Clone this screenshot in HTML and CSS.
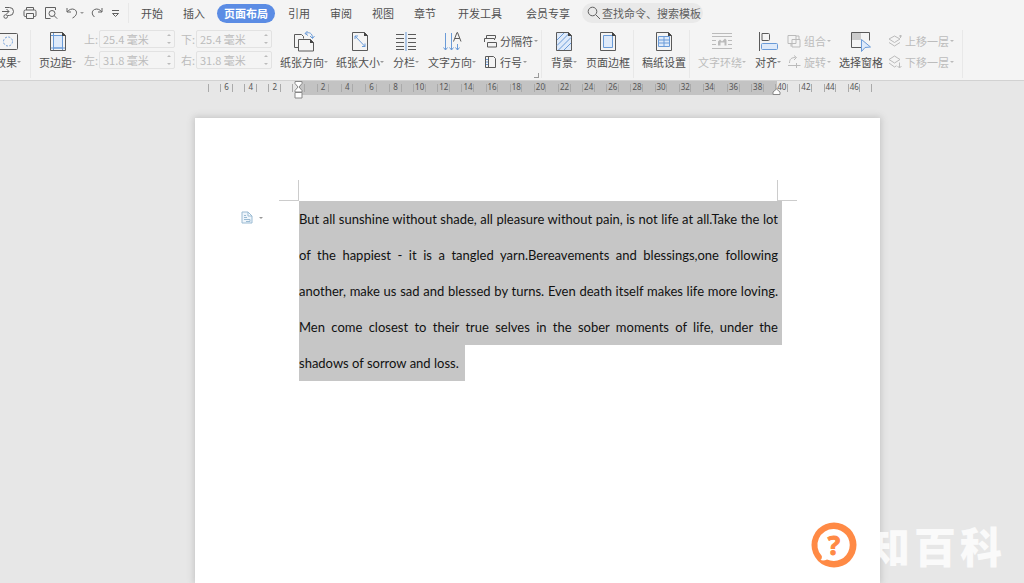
FILE: index.html
```html
<!DOCTYPE html>
<html lang="zh-CN">
<head>
<meta charset="utf-8">
<title>页面布局</title>
<link rel="stylesheet" href="styles.css">
</head>
<body>
<header class="menubar">
  <div class="quick">
    <button class="qbtn" aria-label="格式"><svg width="13" height="14" viewBox="0 0 13 14"><path d="M3 1.500h4.500a4 4 0 0 1 0 8H5.500M0 5.500h7M4.500 3L7 5.500 4.500 8"/><circle cx="3.700" cy="10.500" r="1.800"/></svg></button>
    <button class="qbtn" aria-label="打印"><svg width="14" height="14" viewBox="0 0 14 14"><path d="M3.500 4V1.500h7V4M3.500 10.500H2.200A1.200 1.200 0 0 1 1 9.300V5.500A1.500 1.500 0 0 1 2.500 4h9A1.500 1.500 0 0 1 13 5.500v3.800a1.200 1.200 0 0 1-1.200 1.200h-1.300M3.500 7.500h7v5h-7z"/></svg></button>
    <button class="qbtn" aria-label="打印预览"><svg width="14" height="14" viewBox="0 0 14 14"><path d="M11.500 4V1.500h-10v11h5"/><circle cx="8" cy="7.500" r="3"/><path d="M10.200 9.700l3 3"/></svg></button>
    <button class="qbtn" aria-label="撤销"><svg width="12" height="14" viewBox="0 0 12 14"><path d="M1 2v4h4M1.200 5.800C3 3.500 6 2.300 8.500 3.500c3 1.500 3 6-2 8.500"/></svg><i class="caret"></i></button>
    <button class="qbtn" aria-label="恢复"><svg width="12" height="14" viewBox="0 0 12 14"><path d="M11 2v4H7M10.800 5.800C9 3.500 6 2.300 3.500 3.500c-3 1.500-3 5 0 7.500"/></svg></button>
    <button class="qbtn" aria-label="自定义"><svg width="9" height="14" viewBox="0 0 9 14"><path d="M1 4.500h7M1.500 7.500l3 3 3-3z"/></svg></button>
  </div>
  <nav class="tabs">
    <button class="tab">开始</button>
    <button class="tab">插入</button>
    <button class="tab active">页面布局</button>
    <button class="tab">引用</button>
    <button class="tab">审阅</button>
    <button class="tab">视图</button>
    <button class="tab">章节</button>
    <button class="tab long">开发工具</button>
    <button class="tab long">会员专享</button>
  </nav>
  <label class="search">
    <svg width="14" height="14" viewBox="0 0 14 14"><circle cx="5.500" cy="5.500" r="4.300"/><path d="M8.700 8.700L13 13"/></svg>
    <input type="text" placeholder="查找命令、搜索模板" aria-label="查找命令、搜索模板">
  </label>
</header>

<section class="ribbon">
  <div class="group first">
    <button class="tool"><svg width="20" height="24" viewBox="0 0 20 24"><rect x=".500" y="3.500" width="19" height="16" rx="1" class="ink"/><circle cx="10" cy="11.500" r="4.500" class="blue" stroke-dasharray="2 1.500"/></svg><span>效果<i class="caret"></i></span></button>
  </div>
  <div class="group">
    <button class="tool"><svg width="18" height="24" viewBox="0 0 18 24"><path class="ink" d="M1.500 2.500h12l3 3v15h-15z"/><path class="blue pale" d="M4.500 5.500h9V18h-9z"/><path class="blue" d="M4.500 3v17M13.500 3v17M2 5.500h14M2 18h14"/><path class="dark" d="M13 2l4 4h-4z"/></svg><span>页边距<i class="caret"></i></span></button>
    <div class="fields">
      <label for="mt">上:</label><div class="spin"><input id="mt" value="25.4 毫米" disabled><i class="arrows"></i></div>
      <label for="mb" class="second">下:</label><div class="spin"><input id="mb" value="25.4 毫米" disabled><i class="arrows"></i></div>
      <label for="ml">左:</label><div class="spin"><input id="ml" value="31.8 毫米" disabled><i class="arrows"></i></div>
      <label for="mr" class="second">右:</label><div class="spin"><input id="mr" value="31.8 毫米" disabled><i class="arrows"></i></div>
    </div>
    <button class="tool"><svg width="22" height="24" viewBox="0 0 22 24"><path class="ink" d="M5 17.500H1.500v-13h7l2 2v2"/><path class="ink" d="M5.500 9.500h12l3 3v8.500h-15z"/><path class="dark" d="M17 9l4 4h-4z"/><path class="blue" d="M12.500 3.500c4-2 7 0 7 4.500M14.500 1l-2.500 2.500 3 2M17 6l2.500 2.500L21.500 6"/></svg><span>纸张方向<i class="caret"></i></span></button>
    <button class="tool"><svg width="18" height="24" viewBox="0 0 18 24"><path class="ink" d="M1.500 2.500h12l3 3v15h-15z"/><path class="dark" d="M13 2l4 4h-4z"/><path class="blue" d="M4 6l10 10.500M4 9V6h3M14 13.500v3h-3"/></svg><span>纸张大小<i class="caret"></i></span></button>
    <button class="tool"><svg width="22" height="24" viewBox="0 0 22 24"><path class="ink" d="M1 4.500h8M1 8.500h8M1 12.500h8M1 16.500h8M1 19.500h8M13 4.500h8M13 8.500h8M13 12.500h8M13 16.500h8M13 19.500h8"/><path class="blue" d="M11 2v19"/></svg><span>分栏<i class="caret"></i></span></button>
    <button class="tool"><svg width="20" height="24" viewBox="0 0 20 24"><path class="blue" d="M3.500 3v17M9.500 3v17M15.500 14v6M1.500 17.500l2 2.500 2-2.500M7.500 17.500l2 2.500 2-2.500M13.500 17.500l2 2.500 2-2.500"/><path class="ink" d="M11.500 11.500l3.500-9h.500l3.500 9M12.800 8.500h5"/></svg><span>文字方向<i class="caret"></i></span></button>
    <div class="stack">
      <button class="mini"><svg width="13" height="14" viewBox="0 0 13 14"><path class="ink" d="M2.500 4.500v-3h9v3M.500 8V4.500h10V6M3.500 13V8.500h9V13z"/></svg>分隔符<i class="caret"></i></button>
      <button class="mini"><svg width="13" height="14" viewBox="0 0 13 14"><path class="ink" d="M1.500 1.500h8l2 2v9h-10zM4.500 2v11"/><path class="blue" d="M2 4.500h2M2 7h2M2 9.500h2"/></svg>行号<i class="caret"></i></button>
    </div>
    <i class="launcher"></i>
  </div>
  <div class="group">
    <button class="tool"><svg width="18" height="24" viewBox="0 0 18 24"><path class="ink pale" d="M1.500 2.500h12l3 3v15h-15z"/><path class="blue" d="M2 10l7-7M2 15.500L14 3.500M3.500 20L16 7.500M9 20l7-7"/><path class="dark" d="M13 2l4 4h-4z"/></svg><span>背景<i class="caret"></i></span></button>
    <button class="tool"><svg width="18" height="24" viewBox="0 0 18 24"><path class="ink" d="M1.500 2.500h12l3 3v15h-15z"/><path class="blue pale" d="M4.500 5.500h9v12h-9z"/><path class="dark" d="M13 2l4 4h-4z"/></svg><span>页面边框</span></button>
  </div>
  <div class="group">
    <button class="tool"><svg width="18" height="24" viewBox="0 0 18 24"><path class="ink" d="M1.500 2.500h12l3 3v15h-15z"/><path class="blue pale" d="M3.500 6.500h11v10h-11zM9 6.500v10M3.500 10h11M3.500 13h11"/><path class="dark" d="M13 2l4 4h-4z"/></svg><span>稿纸设置</span></button>
  </div>
  <div class="group">
    <button class="tool" disabled><svg width="22" height="24" viewBox="0 0 22 24"><path class="ink" d="M1 3.500h20M1 6.500h20M1 10.500h4M17 10.500h4M1 14.500h4M17 14.500h4M1 18.500h20"/><path class="dark" d="M7 15.500v-4l2-2 2 2 3-3 1.500 1.500v5.500h-2v-3h-4v3z"/></svg><span>文字环绕<i class="caret"></i></span></button>
    <button class="tool"><svg width="20" height="24" viewBox="0 0 20 24"><path class="ink" d="M1.500 2v19M4 3.500h6.500a1 1 0 0 1 1 1v5a1 1 0 0 1-1 1H4z"/><rect class="blue pale" x="3.500" y="13.500" width="16" height="6" rx="1"/></svg><span>对齐<i class="caret"></i></span></button>
    <div class="stack tight">
      <button class="mini" disabled><svg width="14" height="14" viewBox="0 0 14 14"><path class="ink" d="M1 1.500h8v8H1zM5 5.500h8v7.500H5zM4 9.500v3M9 2h3v3"/></svg>组合<i class="caret"></i></button>
      <button class="mini" disabled><svg width="14" height="14" viewBox="0 0 14 14"><path class="ink" d="M1 10.500h12.500M9.500 8v5M2.500 8c0-4 2-5.500 6-5.500M7 .500l2.500 2L7 5"/></svg>旋转<i class="caret"></i></button>
    </div>
    <button class="tool"><svg width="22" height="24" viewBox="0 0 22 24"><path class="shade" d="M2 3h9v7H2z"/><path class="ink" d="M11 17.500H1.500v-15h18v8"/><path class="blue pale" d="M11.500 9.500v12l3.500-4 5.500-.500z"/></svg><span>选择窗格</span></button>
    <div class="stack tight">
      <button class="mini" disabled><svg width="14" height="14" viewBox="0 0 14 14"><path class="ink" d="M6.500 2L12 5 6.500 8.500 1 5zM1 8.500l5.500 3.500L12 8.500M12.500 4V1M11 2h3"/></svg>上移一层<i class="caret"></i></button>
      <button class="mini" disabled><svg width="14" height="14" viewBox="0 0 14 14"><path class="ink" d="M1 4.500L6.500 1 12 4.500 6.500 8zM1 8l5.500 4 2-1.200M11.500 7.500v5M9.500 11l2 2 2-2"/></svg>下移一层<i class="caret"></i></button>
    </div>
  </div>
</section>

<main class="workspace">
  <div class="ruler">
    <div class="scale">
      <span>6</span><span>4</span><span>2</span><span></span><span>2</span><span>4</span><span>6</span><span>8</span><span>10</span><span>12</span><span>14</span><span>16</span><span>18</span><span>20</span><span>22</span><span>24</span><span>26</span><span>28</span><span>30</span><span>32</span><span>34</span><span>36</span><span>38</span><span>40</span><span>42</span><span>44</span><span>46</span>
      <svg class="indent" width="9" height="18" viewBox="0 0 9 18"><path d="M1 .500h7v2L5 6l3 3.500v1.500H1V9.500L4 6 1 2.500zM1 11.500h7v5.500H1z"/></svg>
      <svg class="indent-right" width="9" height="7" viewBox="0 0 9 7"><path d="M1 6.500V4l3.500-3L8 4v2.500z"/></svg>
    </div>
  </div>
  <article class="page">
    <i class="corner left"></i><i class="corner right"></i>
    <button class="paste" aria-label="段落"><svg width="12" height="13" viewBox="0 0 12 13"><path d="M1 1h6l4 4v7H1zM7 1v4h4"/><path d="M3 4.500h2M3 6.500h3M3 8.500h6v2H5"/></svg><i class="caret"></i></button>
    <div class="text">
      <p>But all sunshine without shade, all pleasure without pain, is not life at all.Take the lot</p>
      <p>of the happiest - it is a tangled yarn.Bereavements and blessings,one following</p>
      <p>another, make us sad and blessed by turns. Even death itself makes life more loving.</p>
      <p>Men come closest to their true selves in the sober moments of life, under the</p>
      <p class="end">shadows of sorrow and loss.</p>
    </div>
  </article>
  <div class="watermark">
    <svg width="46" height="46" viewBox="0 0 46 46"><circle cx="23" cy="23" r="22.500" fill="#ff8a45"/><path fill="#fff" d="M23 7a16 16 0 1 1-7 30.500c-2 1-4.500 1.200-6.500.500 1.300-1 1.600-2.500 1.300-4A16 16 0 0 1 23 7z"/><text x="23" y="33" text-anchor="middle">?</text></svg>
    <div class="brand"><span>知</span><span>百</span><span>科</span></div>
  </div>
</main>
</body>
</html>
```
FILE: styles.css
```css
* { box-sizing: border-box; }
body {
  margin: 0;
  min-height: 100vh;
  display: flex;
  flex-direction: column;
  overflow: hidden;
  background: #e7e7e7;
  color: #505050;
  font: 11px/16px "Noto Sans CJK SC", sans-serif;
}
button, input { font: inherit; color: inherit; border: 0; background: none; padding: 0; }
button { display: flex; align-items: center; white-space: nowrap; }
svg { flex: none; fill: none; stroke: #606060; }
p { margin: 0; }

.caret {
  display: inline-block;
  flex: none;
  width: 4px;
  border: 2px solid transparent;
  border-top-color: #999;
  border-bottom: 0;
  vertical-align: middle;
}

.menubar { display: flex; align-items: center; height: 26px; background: #f4f4f4; }
.quick {
  display: flex;
  justify-content: space-between;
  align-items: center;
  width: 129px;
  height: 20px;
  padding: 0 8px 0 2px;
  border-right: 1px solid #e8e8e8;
}
.qbtn { gap: 2px; }
.tabs { display: flex; align-items: center; margin-left: 2px; }
.tab { padding: 0 10px; height: 19px; }
.tab.long { padding: 0 12px; }
.tab.active { padding: 0 7px; margin: 0 3px 0 2px; border-radius: 10px; background: #5b8ce4; color: #fff; font-weight: 700; }
.search { display: flex; align-items: center; gap: 1px; width: 121px; height: 20px; padding-left: 5px; border-radius: 10px; background: #e9e9e9; }
.search input { flex: 1; min-width: 0; outline: 0; }
.search input::placeholder { color: #606060; opacity: 1; }

.ribbon {
  display: flex;
  margin-left: -6px;
  padding: 4px 0 2px;
  background: #f4f4f4;
  border-bottom: 1px solid #d2d2d2;
}
.group { position: relative; display: flex; align-items: flex-start; gap: 8px; padding: 0 3px 6px 8px; border-right: 1px solid #e8e8e8; }
.group.first { padding: 0 8px 6px 0; }
.group:last-child { padding-right: 8px; }
.tool { flex-direction: column; min-width: 28px; }
.tool span { display: flex; align-items: center; }
button:disabled { color: #bcbcbc; }
.ink { stroke: #5a5a5a; }
.blue { stroke: #6a9bd8; }
.pale { fill: #deeafa; }
.dark { fill: #444; stroke: none; }
.shade { fill: #ccc; stroke: none; }
button:disabled .ink { stroke: #bbb; }
button:disabled .dark { fill: #bbb; }
button:disabled .caret { border-top-color: #bbb; }

.fields { display: grid; grid-template-columns: 15px 76px 21px 76px; gap: 3px 0; color: #bcbcbc; }
.fields label { line-height: 18px; white-space: nowrap; }
.fields .second { padding-left: 6px; }
.spin { display: flex; align-items: center; justify-content: space-between; height: 18px; padding: 0 3px; border: 1px solid #e2e2e2; border-radius: 2px; }
.spin input { width: 60px; height: 16px; }
.arrows { display: flex; flex-direction: column; gap: 6px; }
.arrows::before, .arrows::after { content: ""; border: 2px solid transparent; }
.arrows::before { border-bottom-color: #bbb; border-top: 0; }
.arrows::after { border-top-color: #bbb; border-bottom: 0; }

.stack { display: flex; flex-direction: column; }
.stack.tight { margin-left: -3px; }
.mini { gap: 3px; height: 21px; }
.mini .caret { margin-left: -2px; }
.launcher { position: absolute; right: 2px; bottom: 0; width: 5px; height: 5px; border: solid #999; border-width: 0 1px 1px 0; }

.workspace {
  position: relative;
  flex: 1;
  display: grid;
  grid-template-columns: minmax(0, 195fr) minmax(0, 685fr) minmax(0, 144fr);
  grid-template-rows: auto 1fr;
  row-gap: 23px;
}
.ruler { grid-column: 2; padding: 0 8px 0 13px; }
.scale {
  position: relative;
  display: flex;
  height: 14px;
  padding-left: 12px;
  background: linear-gradient(90deg, transparent 91px, #c3c3c3 91px, #c3c3c3 569px, transparent 569px);
  font: 8px/12px "Noto Sans", sans-serif;
  color: #555;
}
.scale span {
  flex: 1 1 0;
  min-width: 0;
  display: flex;
  justify-content: center;
  padding-right: 11px;
  background:
    linear-gradient(#aaa, #aaa) left center / 1px 8px no-repeat,
    linear-gradient(#aaa, #aaa) center / 1px 8px no-repeat;
}
.scale::before, .scale::after { content: ""; position: absolute; left: 0; top: 3px; width: 1px; height: 8px; background: #aaa; }
.scale::after { left: auto; right: 0; }
.indent, .indent-right { position: absolute; fill: #fff; stroke: #888; }
.indent { left: 86px; top: 0; }
.indent-right { left: 564px; top: 7px; }

.page {
  grid-column: 2;
  position: relative;
  padding: 83px 98px 0 104px;
  background: #fff;
  box-shadow: 0 0 7px 1px #c2c2c2;
}
.corner { position: absolute; top: 62px; width: 20px; height: 21px; border: 0 solid #ccc; border-bottom-width: 1px; }
.corner.left { left: 84px; border-right-width: 1px; }
.corner.right { right: 83px; border-left-width: 1px; }
.paste { position: absolute; left: 46px; top: 93px; gap: 6px; }
.paste svg { fill: #eef5fb; stroke: #9bbbd3; }
.text { font: 13px/36px Lato, sans-serif; color: #111; }
.text p { padding-right: 4px; background: #c6c6c6; text-align-last: justify; white-space: nowrap; }
.text .end { width: fit-content; padding-right: 6px; text-align-last: left; }

.watermark { position: absolute; right: 22px; bottom: 15px; display: flex; align-items: center; gap: 11px; }
.watermark text { fill: #ff8a45; stroke: #ff8a45; stroke-width: 1px; font: 700 26px "Open Sans", sans-serif; }
.watermark svg { stroke: none; }
.brand { display: flex; gap: 4px; font-size: 42px; line-height: 46px; font-weight: 900; color: #fff; opacity: .8; }
```
